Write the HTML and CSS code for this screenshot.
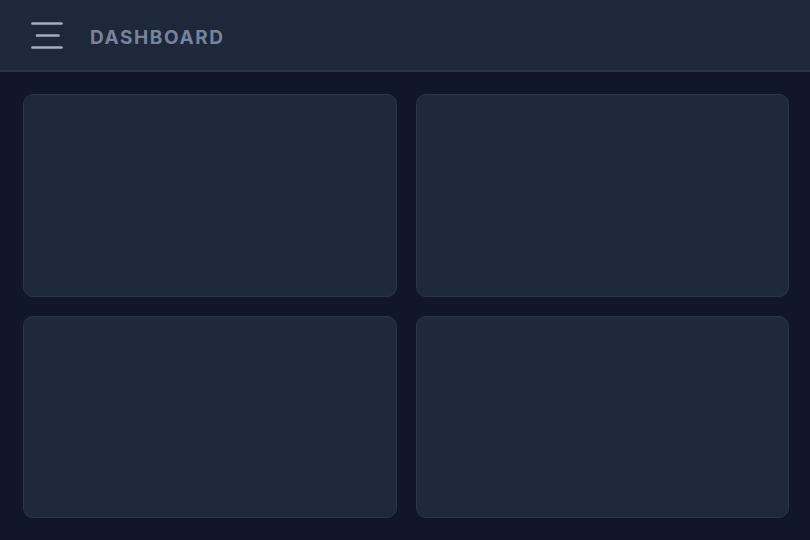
FILE: index.html
```html
<!DOCTYPE html>
<html lang="en">
<head>
<meta charset="utf-8">
<title>Dashboard</title>
<link rel="stylesheet" href="styles.css">
</head>
<body>
<header class="topbar">
  <button class="menu-btn" aria-label="Menu">
    <svg width="32" height="28" viewBox="0 0 32 28">
      <line x1="1.5" y1="2.5" x2="30.5" y2="2.5" />
      <line x1="6" y1="14.5" x2="27.5" y2="14.5" />
      <line x1="1.5" y1="26.5" x2="30.5" y2="26.5" />
    </svg>
  </button>
  <h1 class="title">DASHBOARD</h1>
</header>
<main class="grid">
  <section class="card"></section>
  <section class="card"></section>
  <section class="card"></section>
  <section class="card"></section>
</main>
</body>
</html>
```
FILE: styles.css
```css
* { box-sizing: border-box; }
html, body { height: 100%; }
body {
  margin: 0;
  background: #0f1729;
  font-family: Inter, "Noto Sans", sans-serif;
  display: flex;
  flex-direction: column;
}
.topbar {
  height: 72px;
  flex: none;
  background: #1d2839;
  border-bottom: 2px solid #27334a;
  display: flex;
  align-items: center;
  padding-left: 31px;
  gap: 27px;
}
.menu-btn {
  background: none;
  border: 0;
  padding: 0;
  width: 32px;
  height: 28px;
  display: flex;
}
.menu-btn svg line {
  stroke: #a3afbf;
  stroke-width: 2.6;
  stroke-linecap: round;
}
.title {
  margin: 0;
  font-size: 19px;
  font-weight: 700;
  letter-spacing: 1.6px;
  color: #76849a;
  margin-top: 5px;
}
.grid {
  flex: 1;
  display: grid;
  grid-template-columns: 1fr 1fr;
  grid-template-rows: 1fr 1fr;
  gap: 19px;
  padding: 22px 21px 22px 23px;
}
.card {
  background: #1e293b;
  border: 1px solid #2a364a;
  border-radius: 10px;
}
```
